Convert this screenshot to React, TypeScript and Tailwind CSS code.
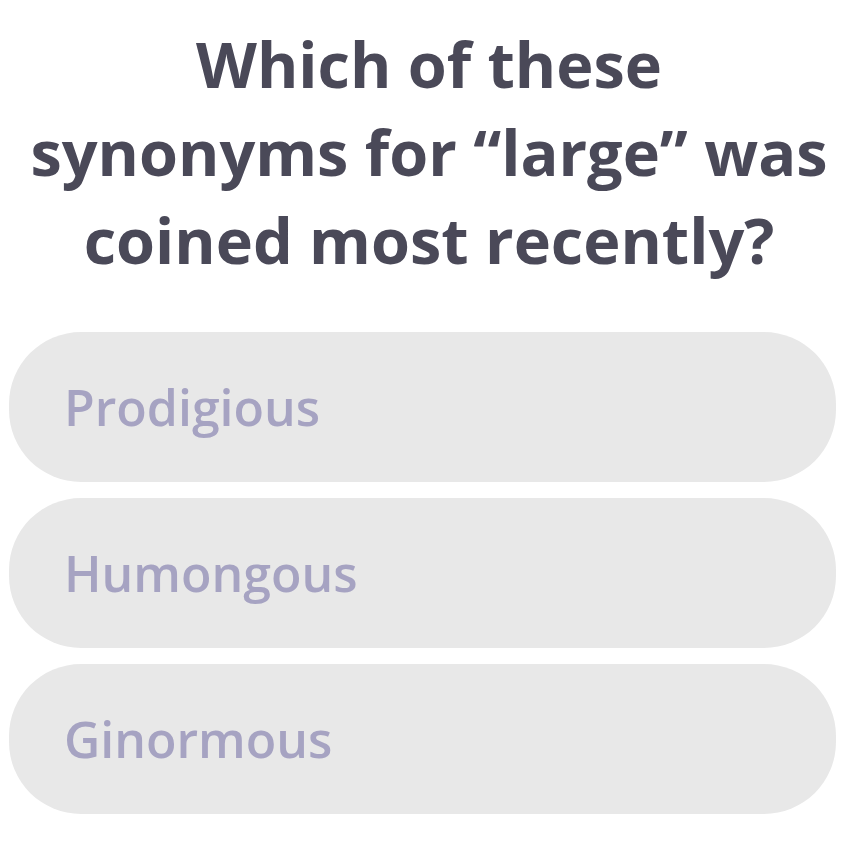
const OPTIONS = ['Prodigious', 'Humongous', 'Ginormous'];

export default function App() {
  return (
    <div className="w-[858px] h-[852px] bg-white flex flex-col items-center font-['Open_Sans',sans-serif]">
      <h1 className="mt-[20px] w-full text-center text-[63px] leading-[88px] font-bold text-[#4a4958]">
        Which of these
        <br />
        synonyms for “large” was
        <br />
        coined most recently?
      </h1>
      <div className="mt-[48px] w-full pl-[9px] pr-[22px] flex flex-col gap-[16px]">
        {OPTIONS.map((label) => (
          <div
            key={label}
            className="h-[150px] rounded-[72px] bg-[#e8e8e8] flex items-center pl-[55px]"
          >
            <span className="text-[50px] font-semibold text-[#a6a3c2]">{label}</span>
          </div>
        ))}
      </div>
    </div>
  );
}
